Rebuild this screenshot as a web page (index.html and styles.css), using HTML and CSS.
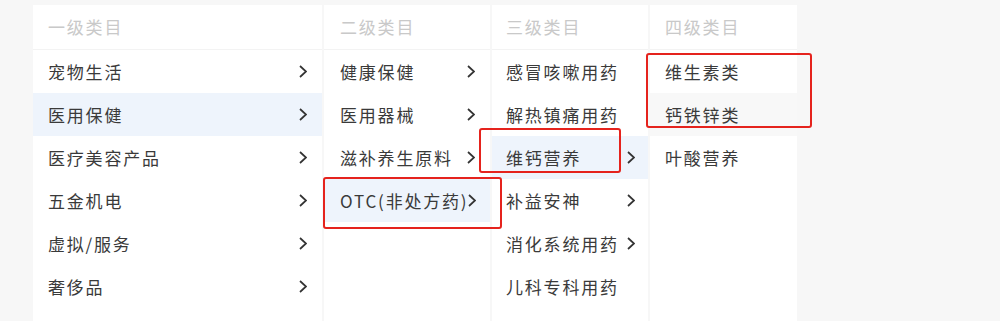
FILE: index.html
```html
<!DOCTYPE html>
<html lang="zh-CN">
<head>
<meta charset="utf-8">
<title>类目选择</title>
<link rel="stylesheet" href="styles.css">
</head>
<body>
<div class="cascader">
  <div class="col col-1">
    <div class="head">一级类目</div>
    <div class="row"><span>宠物生活</span><svg class="chev" viewBox="0 0 8 13"><polyline points="1,1 7,6.5 1,12"/></svg></div>
    <div class="row active"><span>医用保健</span><svg class="chev" viewBox="0 0 8 13"><polyline points="1,1 7,6.5 1,12"/></svg></div>
    <div class="row"><span>医疗美容产品</span><svg class="chev" viewBox="0 0 8 13"><polyline points="1,1 7,6.5 1,12"/></svg></div>
    <div class="row"><span>五金机电</span><svg class="chev" viewBox="0 0 8 13"><polyline points="1,1 7,6.5 1,12"/></svg></div>
    <div class="row"><span>虚拟/服务</span><svg class="chev" viewBox="0 0 8 13"><polyline points="1,1 7,6.5 1,12"/></svg></div>
    <div class="row"><span>奢侈品</span><svg class="chev" viewBox="0 0 8 13"><polyline points="1,1 7,6.5 1,12"/></svg></div>
    <div class="row"><span>其他</span><svg class="chev" viewBox="0 0 8 13"><polyline points="1,1 7,6.5 1,12"/></svg></div>
  </div>
  <div class="col col-2">
    <div class="head">二级类目</div>
    <div class="row"><span>健康保健</span><svg class="chev" viewBox="0 0 8 13"><polyline points="1,1 7,6.5 1,12"/></svg></div>
    <div class="row"><span>医用器械</span><svg class="chev" viewBox="0 0 8 13"><polyline points="1,1 7,6.5 1,12"/></svg></div>
    <div class="row"><span>滋补养生原料</span><svg class="chev" viewBox="0 0 8 13"><polyline points="1,1 7,6.5 1,12"/></svg></div>
    <div class="row active"><span>OTC(非处方药)</span><svg class="chev" viewBox="0 0 8 13"><polyline points="1,1 7,6.5 1,12"/></svg></div>
  </div>
  <div class="col col-3">
    <div class="head">三级类目</div>
    <div class="row"><span>感冒咳嗽用药</span></div>
    <div class="row"><span>解热镇痛用药</span></div>
    <div class="row active"><span>维钙营养</span><svg class="chev" viewBox="0 0 8 13"><polyline points="1,1 7,6.5 1,12"/></svg></div>
    <div class="row"><span>补益安神</span><svg class="chev" viewBox="0 0 8 13"><polyline points="1,1 7,6.5 1,12"/></svg></div>
    <div class="row"><span>消化系统用药</span><svg class="chev" viewBox="0 0 8 13"><polyline points="1,1 7,6.5 1,12"/></svg></div>
    <div class="row"><span>儿科专科用药</span></div>
    <div class="row"><span>风湿骨痛用药</span></div>
  </div>
  <div class="col col-4">
    <div class="head">四级类目</div>
    <div class="row"><span>维生素类</span></div>
    <div class="row hover"><span>钙铁锌类</span></div>
    <div class="row"><span>叶酸营养</span></div>
  </div>
</div>
<div class="mark mark-otc"></div>
<div class="mark mark-vit"></div>
<div class="mark mark-leaf"></div>
</body>
</html>
```

FILE: styles.css
```css
html, body {
  margin: 0;
  padding: 0;
  height: 100%;
  overflow: hidden;
  background: #f7f7f7;
  font-family: "Noto Sans CJK SC", "Noto Sans", sans-serif;
}

.cascader {
  display: flex;
  gap: 2px;
  padding: 5px 0 0 33px;
}

.col {
  background: #fff;
  height: 360px;
  flex: none;
}

.col-1 { width: 289px; }
.col-2 { width: 166px; }
.col-3 { width: 156px; }
.col-4 { width: 147px; }

.head {
  height: 44px;
  line-height: 44px;
  padding: 0 15px;
  font-size: 17px;
  letter-spacing: 1.8px;
  color: #c9c9c9;
  border-bottom: 1px solid #f3f3f3;
}

.row {
  height: 43px;
  display: flex;
  align-items: center;
  justify-content: space-between;
  padding: 0 15px 0 15px;
  font-size: 17px;
  letter-spacing: 1.8px;
  color: #3a3a3a;
  white-space: nowrap;
}

.col-2 .row { padding: 0 15px 0 16px; }
.col-3 .row { padding: 0 13px 0 14px; }
.col-3 .head { padding: 0 13px 0 14px; }
.col-2 .head { padding: 0 15px 0 16px; }

.row.active { background: #eef4fc; }
.row.hover { background: #f8f8f8; }

.chev {
  width: 8px;
  height: 13px;
  flex: none;
  fill: none;
  stroke: #333;
  stroke-width: 1.7;
}

.mark {
  position: absolute;
  border: 2.5px solid #e5231d;
  border-radius: 3px;
  box-sizing: border-box;
}

.mark-otc { left: 323px; top: 177px; width: 179px; height: 52px; }
.mark-vit { left: 479px; top: 128px; width: 142px; height: 45px; }
.mark-leaf { left: 646px; top: 53px; width: 166px; height: 75px; }
```
